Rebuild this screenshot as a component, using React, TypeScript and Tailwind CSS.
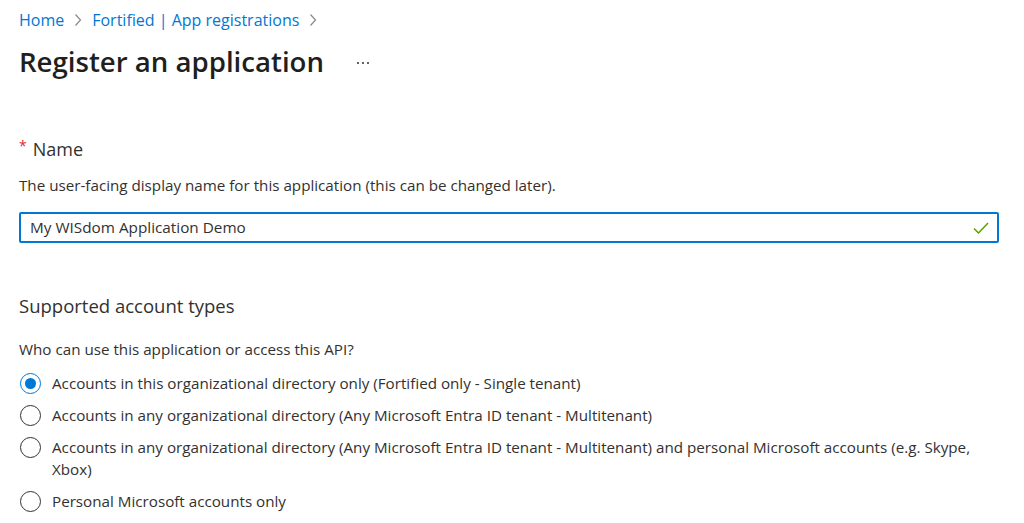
import React from 'react';

const options = [
  'Accounts in this organizational directory only (Fortified only - Single tenant)',
  'Accounts in any organizational directory (Any Microsoft Entra ID tenant - Multitenant)',
  'Accounts in any organizational directory (Any Microsoft Entra ID tenant - Multitenant) and personal Microsoft accounts (e.g. Skype, Xbox)',
  'Personal Microsoft accounts only',
];

const Chevron = () => (
  <svg width="8" height="14" viewBox="0 0 8 14" fill="none" className="shrink-0">
    <path d="M1.5 1.5 L6.5 7 L1.5 12.5" stroke="#8a8886" strokeWidth="1.2" />
  </svg>
);

const Radio: React.FC<{ checked?: boolean }> = ({ checked }) => (
  <span
    className={`mt-[1px] ml-[1px] flex h-[21px] w-[21px] shrink-0 items-center justify-center rounded-full border bg-white ${
      checked ? 'border-[#0078d4]' : 'border-[#323130]'
    }`}
  >
    {checked && <span className="h-[11px] w-[11px] rounded-full bg-[#0078d4]" />}
  </span>
);

export default function App() {
  return (
    <div className="h-[523px] w-[1024px] overflow-hidden bg-white pl-[19px] pr-[25px] text-[#323130] [font-family:'Open_Sans',sans-serif]">
      <nav className="flex items-center pt-[8px] text-[16px] leading-[24px] text-[#0078d4]">
        <span>Home</span>
        <span className="mx-[10px]"><Chevron /></span>
        <span>Fortified | App registrations</span>
        <span className="ml-[10px]"><Chevron /></span>
      </nav>

      <div className="mt-[12px] flex items-center">
        <h1 className="text-[27.6px] font-semibold leading-[34px] text-[#201f1e]">Register an application</h1>
        <span className="ml-[33px] mt-[4px] flex gap-[3px]">
          <span className="h-[2px] w-[2px] rounded-full bg-[#323130]" />
          <span className="h-[2px] w-[2px] rounded-full bg-[#323130]" />
          <span className="h-[2px] w-[2px] rounded-full bg-[#323130]" />
        </span>
      </div>

      <div className="mt-[57px] flex items-center text-[18px] leading-[28px]">
        <span className="mr-[6px] -mt-[6px] text-[14px] leading-none text-[#e0262c]">*</span>
        <span>Name</span>
      </div>
      <p className="mt-[11px] text-[15.2px] leading-[22px]">
        The user-facing display name for this application (this can be changed later).
      </p>

      <div className="mt-[16px] flex h-[31px] items-center rounded-[2px] border-2 border-[#0078d4] pl-[9px] pr-[8px]">
        <span className="flex-1 text-[15.3px]">My WISdom Application Demo</span>
        <svg width="16" height="12" viewBox="0 0 16 12" fill="none">
          <path d="M1 6.5 L5.5 11 L15 1" stroke="#57a300" strokeWidth="1.5" />
        </svg>
      </div>

      <h2 className="mt-[49px] text-[18.5px] leading-[28px]">Supported account types</h2>
      <p className="mt-[18px] text-[15.2px] leading-[22px]">Who can use this application or access this API?</p>

      <div className="mt-[12px] flex flex-col gap-[10px]">
        {options.map((o, i) => (
          <label key={i} className="flex items-start gap-[11px] text-[15.2px] leading-[22px]">
            <Radio checked={i === 0} />
            <span>{o}</span>
          </label>
        ))}
      </div>
    </div>
  );
}
